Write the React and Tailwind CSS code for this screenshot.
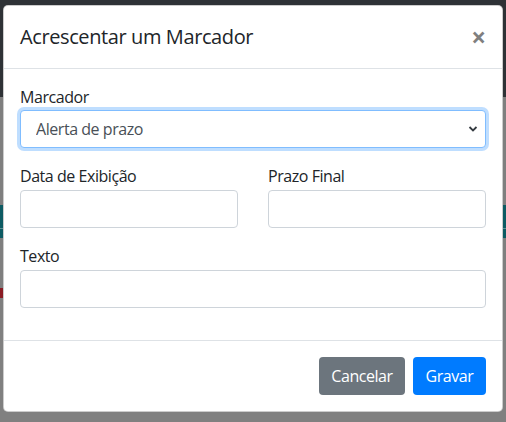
import React from "react";

const fontStack = { fontFamily: '"Open Sans", "Noto Sans", Arial, sans-serif' };

const Field = ({ label, gap = "mb-[2px]", children }) => (
  <div className="mb-4">
    <label className={`block ${gap} text-base leading-6 tracking-[-0.45px] text-[#212529]`}>{label}</label>
    {children}
  </div>
);

const TextInput = () => (
  <input
    type="text"
    className="block w-full h-[38px] px-3 rounded-[4px] border border-[#ced4da] bg-white text-base text-[#495057] outline-none"
  />
);

export default function App() {
  return (
    <div className="relative w-[506px] h-[422px] overflow-hidden bg-[#7f7f7f]" style={fontStack}>
      {/* page behind the backdrop */}
      <div className="flex flex-col">
        <div className="h-[97px] bg-[#2e3236]" />
        <div className="h-[108px] bg-[#7f7f7f]" />
        <div className="h-[23px] bg-[#0d5b63]" />
        <div className="h-[1px] bg-[#5e8f94]" />
        <div className="h-[9px] bg-[#0d5b63]" />
        <div className="h-[82px] bg-[#7f7f7f] pt-[50px]">
          <div className="w-[3px] h-[10px] bg-[#8a1c24]" />
        </div>
        <div className="h-[102px] bg-[#808080]" />
      </div>

      {/* modal */}
      <div className="absolute left-[3px] top-[5px] w-[500px] bg-white rounded-[5px] border border-black/20 flex flex-col">
        <div className="flex items-start justify-between px-4 py-4 border-b border-[#dee2e6]">
          <h5 className="text-[20px] leading-[30px] font-medium tracking-[-0.4px] text-[#212529]">
            Acrescentar um Marcador
          </h5>
          <button className="text-[26px] leading-[30px] font-bold text-black/50 px-1 -mr-1">×</button>
        </div>

        <div className="px-4 pt-4 pb-4">
          <Field label="Marcador" gap="mb-[1px]">
            <div className="relative">
              <select
                defaultValue="alerta"
                className="block w-full h-[38px] pl-[15px] pr-8 rounded-[4px] border border-[#80bdff] bg-white text-base tracking-[-0.45px] text-[#495057] outline-none appearance-none shadow-[0_0_0_3px_rgba(0,123,255,0.25)]"
              >
                <option value="alerta">Alerta de prazo</option>
              </select>
              <svg
                className="absolute right-[8px] top-[15px] pointer-events-none"
                width="10"
                height="8"
                viewBox="0 0 10 8"
              >
                <path d="M1.5 2 L5 5.5 L8.5 2" fill="none" stroke="#343a40" strokeWidth="1.8" />
              </svg>
            </div>
          </Field>

          <div className="grid grid-cols-2 gap-x-[30px]">
            <Field label="Data de Exibição">
              <TextInput />
            </Field>
            <Field label="Prazo Final">
              <TextInput />
            </Field>
          </div>

          <Field label="Texto">
            <TextInput />
          </Field>
        </div>

        <div className="flex justify-end items-center gap-2 px-4 py-4 border-t border-[#dee2e6]">
          <button className="w-[86px] h-[38px] rounded-[4px] bg-[#6c757d] text-white text-base tracking-[-0.45px]">
            Cancelar
          </button>
          <button className="w-[73px] h-[38px] rounded-[4px] bg-[#007bff] text-white text-base tracking-[-0.45px]">
            Gravar
          </button>
        </div>
      </div>
    </div>
  );
}
